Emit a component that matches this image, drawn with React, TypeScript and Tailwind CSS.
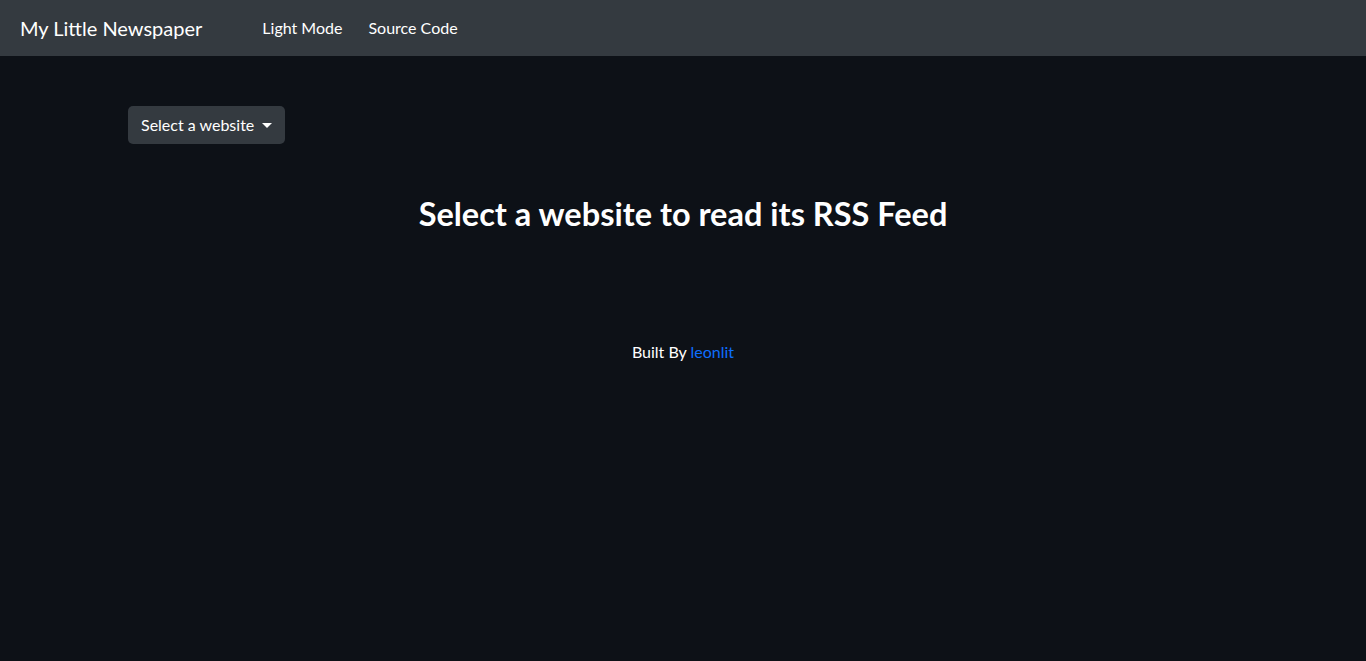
import React from 'react';

const NavBar: React.FC = () => (
  <nav className="h-[56px] bg-[#343a40] flex items-center">
    <a href="#" className="ml-[20px] text-[20px] text-white leading-[30px]">
      My Little Newspaper
    </a>
    <div className="flex items-center ml-[60px] gap-[26px] text-[16px] text-white leading-[24px] -mt-[1px]">
      <a href="#">Light Mode</a>
      <a href="#">Source Code</a>
    </div>
  </nav>
);

const Caret = () => (
  <span className="ml-[8px] inline-block w-0 h-0 border-t-[5px] border-t-white border-x-[5px] border-x-transparent" />
);

export default function App() {
  return (
    <div className="min-h-screen bg-[#0d1117] text-white" style={{ fontFamily: 'Lato, "Open Sans", sans-serif' }}>
      <NavBar />
      <main className="px-[128px] pt-[50px]">
        <button className="flex items-center h-[38px] px-[13px] rounded-[5px] bg-[#343a40] text-[16px] text-white leading-[24px]">
          Select a website
          <Caret />
        </button>
        <h2 className="mt-[51px] text-center text-[32.5px] font-bold leading-[38px]">
          Select a website to read its RSS Feed
        </h2>
        <p className="mt-[107px] text-center text-[16px] leading-[24px]">
          Built By{' '}
          <a href="#" className="text-[#0d6efd]">
            leonlit
          </a>
        </p>
      </main>
    </div>
  );
}
